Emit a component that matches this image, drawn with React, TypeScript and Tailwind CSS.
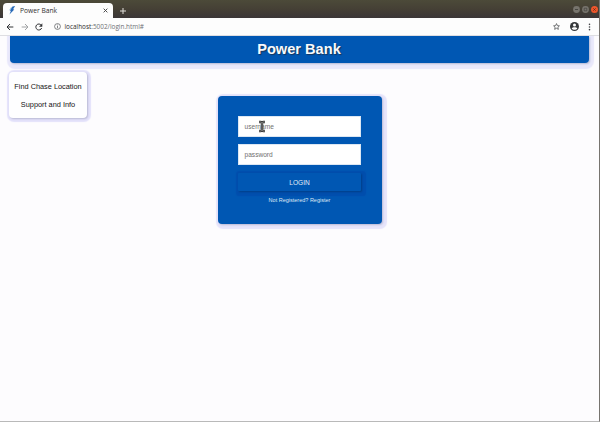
import type { ReactNode } from "react";

function Icon({ className, children }: { className: string; children: ReactNode }) {
  return (
    <svg viewBox="0 0 24 24" fill="none" stroke="currentColor" strokeWidth="3" className={className}>
      {children}
    </svg>
  );
}

function TitleBar() {
  return (
    <div className="flex h-[18px] items-end bg-linear-to-b from-[#4c4a39] via-[#454035] to-[#3b3637] pl-[3px]">
      <div className="flex h-[15px] w-[110px] items-center rounded-t-[4px] bg-[#fdfdfd] pl-[5px] pr-[4px]">
        <svg viewBox="0 0 8 10" className="h-[9px] w-[8px]">
          <path d="M4.5 0.5 7.5 0 5.2 3.5 6.5 4 1.2 9.5 2.8 5.2 1.5 5.2Z" fill="#286ab8" />
          <path d="M3.5 1.2 1.3 4.7" stroke="#83b6dc" strokeWidth="0.8" />
        </svg>
        <span className="ml-[4px] mt-px flex-1 font-['Open_Sans','Noto_Sans',sans-serif] text-[6.7px] leading-none text-[#303030]">
          Power Bank
        </span>
        <Icon className="mr-[1px] size-[5px] text-[#444]">
          <path d="m3 3 18 18M3 21 21 3" strokeWidth="4.5" />
        </Icon>
      </div>
      <Icon className="mb-[3px] ml-[6px] size-[8px] text-[#e0deda]">
        <path d="M3 12h18M12 3v18" />
      </Icon>
      <div className="mb-[5px] ml-auto mr-[1px] flex gap-[2px]">
        <svg viewBox="0 0 7 7" className="size-[7px]">
          <circle cx="3.5" cy="3.5" r="3.4" fill="#77746d" />
          <path d="M2 3.5h3" stroke="#3c3b37" strokeWidth="0.8" />
        </svg>
        <svg viewBox="0 0 7 7" className="size-[7px]">
          <circle cx="3.5" cy="3.5" r="3.4" fill="#77746d" />
          <path d="M2.2 2.2h2.6v2.6H2.2z" fill="none" stroke="#3c3b37" strokeWidth="0.6" />
        </svg>
        <svg viewBox="0 0 7 7" className="size-[7px]">
          <circle cx="3.5" cy="3.5" r="3.5" fill="#ee562b" />
          <path d="m2.3 2.3 2.4 2.4m0-2.4L2.3 4.7" stroke="#5f2b18" strokeWidth="0.8" />
        </svg>
      </div>
    </div>
  );
}

function Toolbar() {
  return (
    <div className="flex h-[18px] items-center border-b border-[#dedee2] bg-[#fdfdfd] pl-[6px] pr-[8px]">
      <Icon className="size-[8px] text-[#303235]">
        <path d="M22 12H3m9-9-9 9 9 9" />
      </Icon>
      <Icon className="ml-[7px] size-[8px] text-[#a0a2a4]">
        <path d="M2 12h19m-9-9 9 9-9 9" />
      </Icon>
      <Icon className="ml-[6px] size-[8px] text-[#303235]">
        <path d="M20 15a9 9 0 1 1-1-8" />
        <path d="M22 1v10H12Z" fill="currentColor" stroke="none" />
      </Icon>
      <svg viewBox="0 0 24 24" fill="none" stroke="#66686b" strokeWidth="2.8" className="ml-[11px] size-[7px]">
        <circle cx="12" cy="12" r="10" />
        <path d="M12 10v8M12 5.500v2.500" />
      </svg>
      <span className="ml-[3.5px] mt-[2px] font-['Open_Sans','Noto_Sans',sans-serif] text-[6.4px] leading-none text-[#6e7073]">
        <span className="text-[#2c2c2c]">localhost</span>:5002/login.html#
      </span>
      <svg viewBox="0 0 24 24" className="ml-auto size-[7px]" fill="none" stroke="#55575a" strokeWidth="2.8">
        <path d="m12 2 3 7 7 .8-5.2 4.8 1.5 7.2-6.3-3.7-6.3 3.7 1.5-7.2L2 9.800l7-.8Z" />
      </svg>
      <svg viewBox="0 0 24 24" className="ml-[10px] size-[9px]">
        <circle cx="12" cy="12" r="12" fill="#36383b" />
        <circle cx="12" cy="8" r="4" fill="#fff" />
        <path d="M4.500 17.500c2-5 13-5 15 0-3 4.500-12 4.500-15 0Z" fill="#fff" />
      </svg>
      <svg viewBox="0 0 3 9" className="ml-[9px] h-[8px] w-[3px] fill-[#3e4043]">
        <circle cx="1.5" cy="1.5" r="0.9" />
        <circle cx="1.5" cy="4.5" r="0.9" />
        <circle cx="1.5" cy="7.5" r="0.9" />
      </svg>
    </div>
  );
}

function Field({ label, children }: { label: string; children?: ReactNode }) {
  return (
    <div className="relative flex h-[21px] items-center border border-[#dce7f3] bg-white pl-[5.5px] pt-[2px] text-[6.6px] leading-none text-[#707070]">
      {label}
      {children}
    </div>
  );
}

export default function App() {
  return (
    <div className="flex h-[422px] w-[600px] flex-col overflow-hidden border-b border-r border-b-[#b9b9b9] border-r-[#77746f] bg-[#fdfcfe] font-['Liberation_Sans',Arial,sans-serif]">
      <TitleBar />
      <Toolbar />
      <main className="flex flex-1 flex-col overflow-hidden">
        <header className="ml-[10px] mr-[10px] flex h-[27px] items-center justify-center rounded-b-[4px] bg-[#0057b3] pr-px shadow-[1px_1px_2px_#b4b9d4,1px_2px_1px_4px_#e9e8fb]">
          <h1 className="text-[14.6px] font-bold leading-none text-[#f7f9fc] [text-shadow:1px_1px_1px_#17365c]">Power Bank</h1>
        </header>
        <div className="flex items-start pl-[9px]">
          <nav className="mt-[9px] flex h-[46px] w-[78px] flex-col items-center justify-center gap-[10px] whitespace-nowrap rounded-[4px] bg-[#fefeff] pt-px text-[7.35px] leading-[8px] text-[#151515] shadow-[1px_1px_2px_#b9b9d4,1px_1px_1px_3px_#e4e2fb]">
            <a>Find Chase Location</a>
            <a>Support and Info</a>
          </nav>
          <form className="ml-[130.5px] mt-[33px] flex h-[128px] w-[164.5px] flex-col rounded-[4px] bg-[#0057b3] pl-[20.5px] pr-[21px] pt-[20px] shadow-[1px_1px_2px_#b9b9d4,1.5px_1.5px_1px_3px_#e6e4fb]">
            <Field label="username">
              <svg viewBox="0 0 8 13" className="absolute left-[19px] top-[3px] h-[13px] w-[8px]">
                <path d="M1 2h1.700L4 3l1.300-1H7M4 3v7M1 11h1.700L4 10l1.300 1H7" fill="none" stroke="#3c3c3c" strokeWidth="2.500" />
                <path d="M1 2h1.700L4 3l1.300-1H7M4 3v7M1 11h1.700L4 10l1.300 1H7" fill="none" stroke="#999" strokeWidth="0.700" />
              </svg>
            </Field>
            <div className="mt-[7px]">
              <Field label="password" />
            </div>
            <button
              type="button"
              className="mt-[8px] flex h-[18px] items-center justify-center rounded-[1px] bg-[#0057b3] pt-[2px] text-[6.6px] leading-none text-[#e4edf7] shadow-[1px_1px_2px_#003f88,1.5px_1.5px_1px_3px_#004ead]"
            >
              LOGIN
            </button>
            <p className="-mx-1 mt-[5px] text-center text-[5.5px] leading-[8px] text-[#dce8f5]">Not Registered? Register</p>
          </form>
        </div>
      </main>
    </div>
  );
}
